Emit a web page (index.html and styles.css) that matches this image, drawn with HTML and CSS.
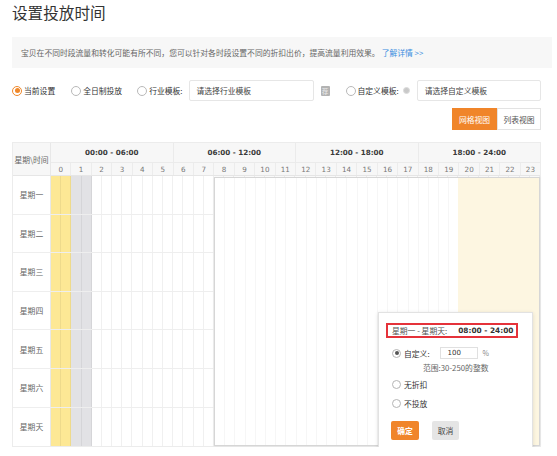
FILE: index.html
```html
<!DOCTYPE html>
<html lang="zh">
<head>
<meta charset="utf-8">
<title>设置投放时间</title>
<link rel="stylesheet" href="styles.css">
</head>
<body>
<div class="page">
  <h1 class="title">设置投放时间</h1>
  <div class="info">宝贝在不同时段流量和转化可能有所不同，您可以针对各时段设置不同的折扣出价，提高流量利用效果。<a class="more">了解详情 &gt;&gt;</a></div>

  <div class="controls">
    <label class="opt o1"><span class="radio on"></span>当前设置</label>
    <label class="opt o2"><span class="radio"></span>全日制投放</label>
    <label class="opt o3"><span class="radio"></span>行业模板:</label>
    <div class="select s1">请选择行业模板</div>
    <span class="rec">荐</span>
    <label class="opt o4"><span class="radio"></span>自定义模板:</label>
    <span class="help"></span>
    <div class="select s2">请选择自定义模板</div>
  </div>

  <div class="views">
    <button class="vbtn active">网格视图</button><button class="vbtn">列表视图</button>
  </div>

  <div class="sched">
    <div class="head">
      <div class="corner">星期\时间</div>
      <div class="hcols">
        <div class="groups">
          <div class="grp">00:00 - 06:00</div>
          <div class="grp">06:00 - 12:00</div>
          <div class="grp">12:00 - 18:00</div>
          <div class="grp">18:00 - 24:00</div>
        </div>
        <div class="hours">
          <span>0</span><span>1</span><span>2</span><span>3</span><span>4</span><span>5</span><span>6</span><span>7</span><span>8</span><span>9</span><span>10</span><span>11</span><span>12</span><span>13</span><span>14</span><span>15</span><span>16</span><span>17</span><span>18</span><span>19</span><span>20</span><span>21</span><span>22</span><span>23</span>
        </div>
      </div>
    </div>
    <div class="row"><div class="day">星期一</div><div class="cells"></div></div>
    <div class="row"><div class="day">星期二</div><div class="cells"></div></div>
    <div class="row"><div class="day">星期三</div><div class="cells"></div></div>
    <div class="row"><div class="day">星期四</div><div class="cells"></div></div>
    <div class="row"><div class="day">星期五</div><div class="cells"></div></div>
    <div class="row"><div class="day">星期六</div><div class="cells"></div></div>
    <div class="row last"><div class="day">星期天</div><div class="cells"></div></div>

    <div class="selection"><div class="sel-white"></div><div class="sel-yellow"></div></div>

    <div class="popup">
      <div class="range-box"><span class="rlbl">星期一 - 星期天:</span><span class="rtime">08:00 - 24:00</span></div>
      <div class="prow p1"><span class="pradio on"></span>自定义:<span class="pinput">100</span><span class="pct">%</span></div>
      <div class="hint">范围:30-250的整数</div>
      <div class="prow p2"><span class="pradio"></span>无折扣</div>
      <div class="prow p3"><span class="pradio"></span>不投放</div>
      <div class="pbtns"><button class="ok">确定</button><button class="cancel">取消</button></div>
    </div>
  </div>
</div>
</body>
</html>
```

FILE: styles.css
```css
* { box-sizing: border-box; }
html, body { margin: 0; padding: 0; background: #fff; }
body {
  font-family: "Noto Sans CJK SC", "Noto Sans", sans-serif;
  color: #333;
  font-size: 7.8px;
}
.page { padding: 0 5px 0 12px; }

.title {
  margin: 0;
  font-size: 15.6px;
  line-height: 24px;
  font-weight: 400;
  color: #333;
}

.info {
  margin-top: 13px;
  height: 31px;
  background: #f7f7f7;
  padding-left: 9px;
  display: flex;
  align-items: center;
  color: #666;
  font-size: 7.8px;
  white-space: nowrap;
}
.info .more { color: #3b8ee0; margin-left: 2px; }

.controls {
  margin-top: 12px;
  height: 21px;
  display: flex;
  align-items: center;
  white-space: nowrap;
}
.opt { display: flex; align-items: center; color: #333; }
.radio {
  width: 10px; height: 10px;
  border: 1px solid #b9b9b9;
  border-radius: 50%;
  margin-right: 2px;
  display: flex; align-items: center; justify-content: center;
  background: #fff;
}
.radio.on { border-color: #f0882a; }
.radio.on::after {
  content: ""; width: 5px; height: 5px; border-radius: 50%; background: #f0882a;
}
.o2 { margin-left: 16px; }
.o3 { margin-left: 15px; }
.o4 { margin-left: 16px; }
.select {
  height: 21px;
  border: 1px solid #e6e6e6;
  border-radius: 2px;
  padding-left: 7px;
  display: flex; align-items: center;
  color: #444;
}
.s1 { width: 125px; margin-left: 6px; }
.s2 { width: 124px; margin-left: 7px; }
.rec {
  margin-left: 7px;
  width: 9px; height: 10px;
  background: #b3b3b3;
  color: #e9e9e9;
  font-size: 6.5px;
  line-height: 10px;
  text-align: center;
  border-radius: 1px;
}
.help {
  margin-left: 4px;
  width: 7px; height: 7px;
  border-radius: 50%;
  background: #c9c9c9;
  border: 1.5px solid #dcdcdc;
}

.views {
  margin-top: 7px;
  width: 529px;
  display: flex;
  justify-content: flex-end;
}
.vbtn {
  font-family: inherit;
  font-size: 7.8px;
  height: 22px;
  width: 44px;
  padding: 0;
  border: 1px solid #e3e3e3;
  background: #fff;
  color: #555;
  margin: 0;
}
.vbtn.active {
  background: #f0852a;
  border-color: #f0852a;
  color: #fff;
  width: 45px;
}

.sched {
  position: relative;
  margin-top: 12px;
  width: 529px;
  border: 1px solid #ececec;
}
.head {
  display: flex;
  height: 33px;
  background: #f7f7f7;
  border-bottom: 1px solid #e6e6e6;
}
.corner {
  width: 38px;
  border-right: 1px solid #e8e8e8;
  display: flex; align-items: center; justify-content: center;
  color: #666;
  white-space: nowrap;
}
.hcols { flex: 1; display: flex; flex-direction: column; }
.groups {
  height: 20px;
  display: flex;
  border-bottom: 1px solid #ebebeb;
}
.grp {
  flex: 1;
  display: flex; align-items: center; justify-content: center;
  font-family: "DejaVu Sans", sans-serif;
  font-weight: 700;
  font-size: 7.2px;
  color: #3a3a3a;
  border-right: 1px solid #ebebeb;
}
.grp:last-child { border-right: 0; }
.hours { flex: 1; display: flex; }
.hours span {
  flex: 1;
  display: flex; align-items: center; justify-content: center;
  font-family: "DejaVu Sans", sans-serif;
  font-size: 7.2px;
  color: #777;
  border-right: 1px solid #ececec;
}
.hours span:last-child { border-right: 0; }

.row {
  display: flex;
  height: 38.6px;
  border-bottom: 1px solid #eeeeee;
}
.row.last { border-bottom: 0; }
.day {
  width: 38px;
  border-right: 1px solid #e8e8e8;
  display: flex; align-items: center; justify-content: center;
  color: #666;
}
.cells {
  flex: 1;
  background:
    repeating-linear-gradient(to right, transparent 0, transparent calc(100% / 48 - 1px), rgba(0,0,0,0.06) calc(100% / 48 - 1px), rgba(0,0,0,0.06) calc(100% / 48)),
    linear-gradient(to right, #fde895 0, #fde895 calc(100% / 24), #e2e2e5 calc(100% / 24), #e2e2e5 calc(200% / 24), #fff calc(200% / 24));
}

.selection {
  position: absolute;
  left: 201px;
  top: 34px;
  right: 0;
  bottom: 0;
  border: 1px solid #d6d6d6;
  box-shadow: 0 0 2px rgba(0,0,0,0.08);
  display: flex;
  background: #fff;
}
.sel-white {
  flex: 1;
  background: repeating-linear-gradient(to right, transparent 0, transparent 9.19px, #f6f6f6 9.19px, #f6f6f6 10.19px);
}
.sel-yellow {
  width: 81px;
  background: #fdf6e1;
}

.popup {
  position: absolute;
  left: 365px;
  top: 169px;
  width: 155px;
  height: 140px;
  background: #fff;
  border: 1px solid #e2e2e2;
  box-shadow: 0 1px 4px rgba(0,0,0,0.12);
  padding: 10px 0 0 7px;
}
.range-box {
  width: 132px;
  height: 15px;
  border: 2px solid #e5323a;
  padding-left: 4px;
  display: flex;
  align-items: center;
  white-space: nowrap;
}
.rlbl { color: #555; }
.rtime {
  margin-left: 11px;
  font-family: "DejaVu Sans", sans-serif;
  font-weight: 700;
  font-size: 7.4px;
  color: #333;
}
.prow {
  display: flex;
  align-items: center;
  height: 14px;
  padding-left: 6px;
  color: #333;
  white-space: nowrap;
}
.p1 { margin-top: 8px; }
.p2 { margin-top: 2px; }
.p3 { margin-top: 5px; }
.pradio {
  width: 9px; height: 9px;
  border: 1px solid #b5b5b5;
  border-radius: 50%;
  margin-right: 3px;
  display: flex; align-items: center; justify-content: center;
}
.pradio.on::after {
  content: ""; width: 4px; height: 4px; border-radius: 50%; background: #555;
}
.pinput {
  margin-left: 10px;
  width: 38px;
  height: 12px;
  border: 1px solid #e0e0e0;
  padding-left: 7px;
  font-family: "DejaVu Sans", sans-serif;
  font-size: 7px;
  line-height: 10px;
  color: #333;
}
.pct { margin-left: 5px; color: #888; font-size: 7px; }
.hint {
  margin-left: 37px;
  margin-top: 1px;
  height: 14px;
  line-height: 14px;
  color: #666;
}
.pbtns { margin-top: 11px; display: flex; padding-left: 5px; }
.pbtns button {
  font-family: inherit;
  font-size: 7.8px;
  height: 19px;
  padding: 0;
  border: 0;
  border-radius: 2px;
}
.ok { width: 28px; background: #f0852a; color: #fff; font-weight: 700; }
.cancel { width: 27px; margin-left: 13px; background: #e5e5e5; color: #444; }
```
